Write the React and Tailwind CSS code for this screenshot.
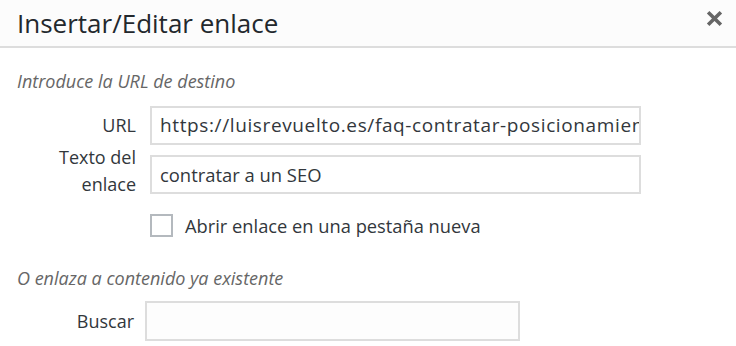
export default function App() {
  return (
    <div className="w-[736px] h-[346px] bg-white overflow-hidden text-[#32373c]" style={{ fontFamily: '"Open Sans", sans-serif' }}>
      <div className="h-[48px] bg-[#fcfcfc] border-b-2 border-[#dddddd] flex items-center justify-between pl-[17px] pr-[13px]">
        <h1 className="text-[26px] leading-none text-[#23282d]">Insertar/Editar enlace</h1>
        <svg width="17" height="17" viewBox="0 0 20 20" className="text-[#666] mb-[9px]">
          <path d="M4 4 L16 16 M16 4 L4 16" stroke="currentColor" strokeWidth="4.2" strokeLinecap="square" />
        </svg>
      </div>

      <div className="px-[17px]">
        <p className="mt-[20px] italic text-[18px] leading-[26px] text-[#666]">Introduce la URL de destino</p>

        <div className="mt-[12px] flex flex-col gap-[10px]">
          <div className="h-[39px] flex items-center gap-[14px]">
            <label className="w-[119px] text-right text-[18px] leading-[27px]">URL</label>
            <div className="w-[491px] h-[39px] border-2 border-[#dddddd] flex items-center px-[8px] overflow-hidden">
              <span className="text-[19px] tracking-[0.62px] whitespace-nowrap">https://luisrevuelto.es/faq-contratar-posicionamiento-seo/</span>
            </div>
          </div>
          <div className="h-[39px] flex items-center gap-[14px]">
            <label className="w-[119px] text-right text-[18px] leading-[27px] mb-[8px]">Texto del enlace</label>
            <div className="w-[491px] h-[39px] border-2 border-[#dddddd] flex items-center px-[8px]">
              <span className="text-[18.4px] whitespace-nowrap">contratar a un SEO</span>
            </div>
          </div>
          <div className="h-[27px] mt-[8px] flex items-center gap-[12px] pl-[133px]">
            <div className="w-[23px] h-[23px] border-2 border-[#b4b9be] bg-white"></div>
            <span className="text-[18.3px] leading-[27px]">Abrir enlace en una pestaña nueva</span>
          </div>
        </div>

        <p className="mt-[26px] italic text-[18px] leading-[26px] text-[#666]">O enlaza a contenido ya existente</p>

        <div className="mt-[10px] flex items-center gap-[11px]">
          <label className="w-[117px] text-right text-[18px] leading-[27px]">Buscar</label>
          <div className="w-[375px] h-[40px] border-2 border-[#dddddd] bg-[#fdfdfd]"></div>
        </div>
      </div>
    </div>
  );
}
